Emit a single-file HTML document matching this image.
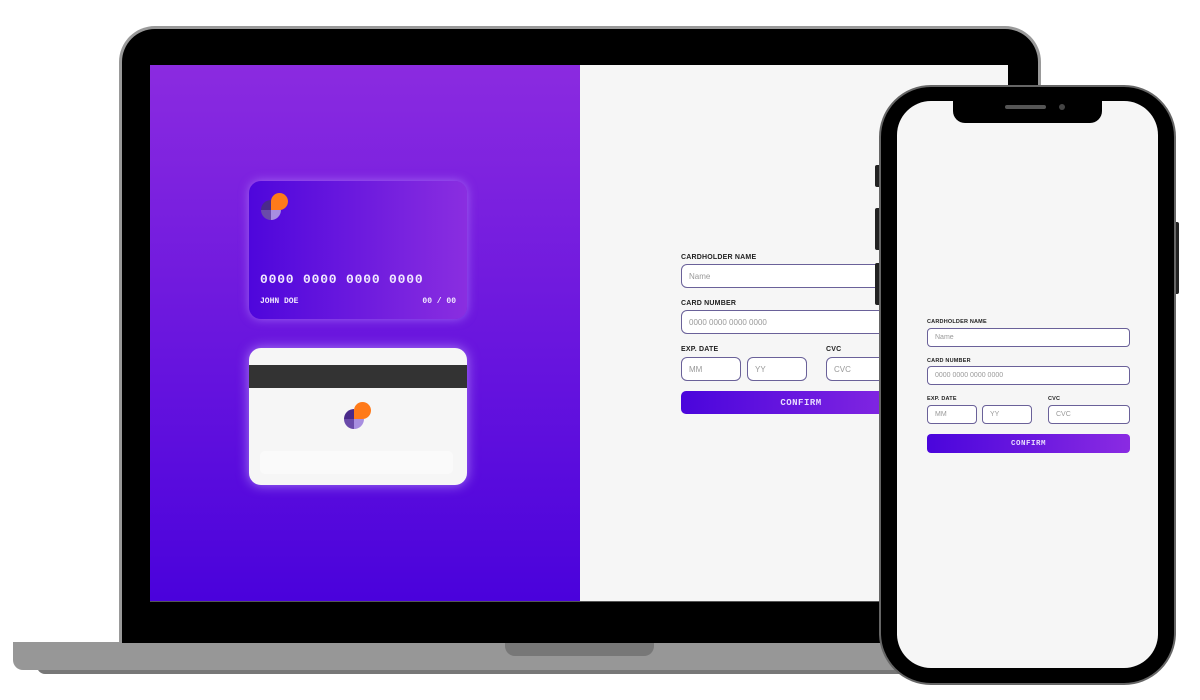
<!DOCTYPE html>
<html><head><style>
*{box-sizing:border-box;margin:0;padding:0}
body{width:1200px;height:700px;background:#fff;position:relative;overflow:hidden;font-family:"Liberation Sans",sans-serif}
.a{position:absolute}
.lbl{position:absolute;font-weight:bold;font-size:7px;color:#222;letter-spacing:.2px}
.inp{position:absolute;background:#fff;border:1.5px solid #6a6199;border-radius:6px;font-size:8px;color:#999;padding-left:7px;display:flex;align-items:center}
.btn{position:absolute;border-radius:5px;background:linear-gradient(90deg,#4a05dc,#8a2be2);color:#e8dcff;font-family:"Liberation Mono",monospace;font-size:9px;display:flex;align-items:center;justify-content:center;letter-spacing:.5px;font-weight:bold}
.mono{font-family:"Liberation Mono",monospace}
</style></head><body>
<div class="a" style="left:37px;top:650px;width:880px;height:24px;background:#777;border-radius:0 0 8px 8px"></div>
<div class="a" style="left:13px;top:642px;width:900px;height:28px;background:#979797;border-radius:0 0 10px 10px"></div>
<div class="a" style="left:505px;top:642px;width:149px;height:14px;background:#777;border-radius:0 0 10px 10px"></div>
<div class="a" style="left:119px;top:26px;width:922px;height:617px;background:#000;border:3px solid #999;border-bottom:none;border-radius:36px 36px 0 0"></div>
<div class="a" style="left:150px;top:65px;width:858px;height:537px;background:#f6f6f6;border-bottom:1px solid #555"></div>
<div class="a" style="left:150px;top:65px;width:430px;height:536px;background:linear-gradient(180deg,#8b2be0,#4a02dc)"></div>
<div class="a" style="left:249px;top:181px;width:218px;height:138px;border-radius:12px;background:linear-gradient(90deg,#4e06dc,#8a2ee0);box-shadow:0 0 10px rgba(190,150,255,.6)">
<svg class="a" style="left:11px;top:11px" width="30" height="30" viewBox="0 0 30 30"><path d="M11 18V8A10 10 0 0 0 1 18Z" fill="#4a2a8a"/><path d="M1 18A10 10 0 0 0 11 28V18Z" fill="#6a4aaa"/><path d="M11 28A10 10 0 0 0 21 18H11Z" fill="#a88ee0"/><path d="M11 18V9.5A8.5 8.5 0 1 1 19.5 18Z" fill="#ff7a1a"/></svg>
<div class="a mono" style="left:11px;top:91px;color:#f0e8ff;font-size:13px;font-weight:bold;letter-spacing:.8px">0000 0000 0000 0000</div>
<div class="a mono" style="left:11px;top:116px;color:#f0e8ff;font-size:8px;font-weight:bold">JOHN DOE</div>
<div class="a mono" style="right:11px;top:116px;color:#f0e8ff;font-size:8px;font-weight:bold">00 / 00</div>
</div>
<div class="a" style="left:249px;top:348px;width:218px;height:137px;border-radius:12px;background:#f6f6f6;overflow:hidden;box-shadow:0 0 12px rgba(200,170,255,.7)">
<div class="a" style="left:0;top:17px;width:218px;height:23px;background:#333"></div>
<svg class="a" style="left:94px;top:53px" width="30" height="30" viewBox="0 0 30 30"><path d="M11 18V8A10 10 0 0 0 1 18Z" fill="#4a2a8a"/><path d="M1 18A10 10 0 0 0 11 28V18Z" fill="#6a4aaa"/><path d="M11 28A10 10 0 0 0 21 18H11Z" fill="#a88ee0"/><path d="M11 18V9.5A8.5 8.5 0 1 1 19.5 18Z" fill="#ff7a1a"/></svg>
<div class="a" style="left:11px;top:103px;width:193px;height:23px;background:#fafafa;border-radius:5px"></div>
</div>
<div class="lbl" style="left:681px;top:254px">CARDHOLDER NAME</div>
<div class="inp" style="left:681px;top:264px;width:240px;height:24px">Name</div>
<div class="lbl" style="left:681px;top:300px">CARD NUMBER</div>
<div class="inp" style="left:681px;top:310px;width:240px;height:24px">0000 0000 0000 0000</div>
<div class="lbl" style="left:681px;top:346px">EXP. DATE</div>
<div class="inp" style="left:681px;top:357px;width:60px;height:24px">MM</div>
<div class="inp" style="left:747px;top:357px;width:60px;height:24px">YY</div>
<div class="lbl" style="left:826px;top:346px">CVC</div>
<div class="inp" style="left:826px;top:357px;width:90px;height:24px">CVC</div>
<div class="btn" style="left:681px;top:391px;width:240px;height:23px">CONFIRM</div>
<div class="a" style="left:875px;top:165px;width:6px;height:22px;background:#222;border-radius:2px"></div>
<div class="a" style="left:875px;top:208px;width:6px;height:42px;background:#222;border-radius:2px"></div>
<div class="a" style="left:875px;top:263px;width:6px;height:42px;background:#222;border-radius:2px"></div>
<div class="a" style="left:1173px;top:222px;width:6px;height:72px;background:#222;border-radius:2px"></div>
<div class="a" style="left:879px;top:85px;width:297px;height:600px;background:#000;border:2px solid #666;border-radius:52px"></div>
<div class="a" style="left:897px;top:101px;width:261px;height:567px;background:#f6f6f6;border-radius:34px"></div>
<div class="a" style="left:953px;top:100px;width:149px;height:23px;background:#000;border-radius:0 0 12px 12px"></div>
<div class="a" style="left:1005px;top:105px;width:41px;height:4px;background:#555;border-radius:2px"></div>
<div class="a" style="left:1059px;top:104px;width:6px;height:6px;background:#444;border-radius:50%"></div>
<div class="lbl" style="left:927px;top:319px;font-size:5.5px">CARDHOLDER NAME</div>
<div class="inp" style="left:927px;top:328px;width:203px;height:19px;font-size:7px;border-width:1.2px;border-radius:4px">Name</div>
<div class="lbl" style="left:927px;top:358px;font-size:5.5px">CARD NUMBER</div>
<div class="inp" style="left:927px;top:366px;width:203px;height:19px;font-size:7px;border-width:1.2px;border-radius:4px">0000 0000 0000 0000</div>
<div class="lbl" style="left:927px;top:396px;font-size:5.5px">EXP. DATE</div>
<div class="inp" style="left:927px;top:405px;width:50px;height:19px;font-size:7px;border-width:1.2px;border-radius:4px">MM</div>
<div class="inp" style="left:982px;top:405px;width:50px;height:19px;font-size:7px;border-width:1.2px;border-radius:4px">YY</div>
<div class="lbl" style="left:1048px;top:396px;font-size:5.5px">CVC</div>
<div class="inp" style="left:1048px;top:405px;width:82px;height:19px;font-size:7px;border-width:1.2px;border-radius:4px">CVC</div>
<div class="btn" style="left:927px;top:434px;width:203px;height:19px;font-size:7.5px;border-radius:4px">CONFIRM</div>
</body></html>
